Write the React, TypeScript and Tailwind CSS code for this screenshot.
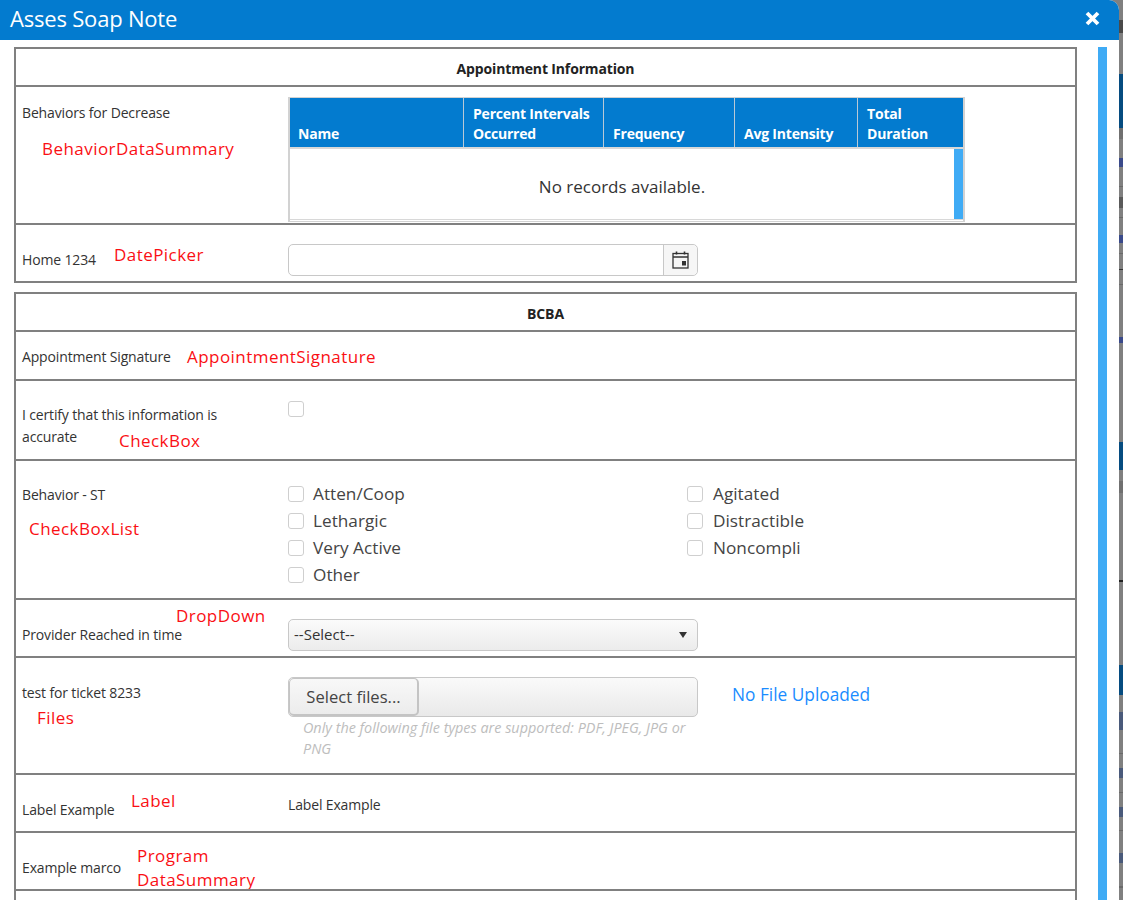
const G = "#808080";
const L = "#6a6a6a";
const B = "#064c80";
const strip: [number, string][] = [
  [20, G], [13, "#4a4a4a"], [41, G], [54, B], [11, "#707070"], [19, G], [9, "#3a4a8a"], [19, G], [1, L],
  [10, G], [11, "#5a5a5a"], [9, G], [1, L], [17, G], [8, "#3a4a8a"], [10, G], [1, L], [15, G], [1, "#333333"],
  [14, G], [1, L], [52, G], [6, "#3a4a8a"], [99, G], [28, B], [11, G], [12, "#707070"], [87, G], [2, "#222222"],
  [83, G], [30, B], [17, G], [18, "#4a5a7a"], [23, G], [1, L], [14, G], [10, "#4a5a7a"], [14, G], [1, L],
  [14, G], [10, "#4a5a7a"], [13, G], [1, L], [22, G], [10, "#4a5a7a"], [23, G], [2, L], [12, G],
];

const Note = ({ className, children }: { className: string; children: React.ReactNode }) => (
  <span className={`absolute text-[17px] leading-[24px] tracking-[0.45px] text-[#fa0f14] ${className}`}>{children}</span>
);

const Box = () => <span className="block w-4 h-4 rounded-[3px] border border-[#cfcfcf] bg-white shrink-0" />;

const CheckItem = ({ label, gap = "gap-[9px]" }: { label: string; gap?: string }) => (
  <div className={`h-[27px] flex items-center text-[17.2px] tracking-[0.02px] text-[#444] ${gap}`}>
    <Box />
    {label}
  </div>
);

const Header = ({ className, children }: { className: string; children: React.ReactNode }) => (
  <div className={`flex items-end pb-[3px] text-[14px] leading-5 tracking-[-0.2px] font-bold text-white border-r border-[#b9c9d6] ${className}`}>
    {children}
  </div>
);

export default function App() {
  return (
    <div className="flex w-[1123px] h-[900px] overflow-hidden bg-[#808080] font-['Open_Sans',sans-serif] text-[14px] tracking-[-0.15px] text-[#333]">
      {/* modal */}
      <div className="w-[1119px] h-[900px] bg-white shrink-0 overflow-hidden rounded-tr-[10px]">
        <div className="h-10 bg-[#037bcf] flex items-center justify-between pl-[10px] pr-[18px] pb-[3px]">
          <span className="text-[22px] tracking-[-0.2px] text-white">Asses Soap Note</span>
          <svg width="17" height="17" viewBox="0 0 17 17">
            <path d="M3 3l11 11M14 3L3 14" stroke="#fff" strokeWidth="3.8" />
          </svg>
        </div>

        <div className="flex pt-[7px] pl-[14px]">
          <div className="w-[1063px] shrink-0">
            {/* Appointment Information */}
            <section className="border-2 border-[#808080]">
              <div className="h-[38px] pt-[3px] border-b-2 border-[#808080] flex items-center justify-center font-bold text-[#222]">
                Appointment Information
              </div>
              <div className="relative h-[138px] border-b-2 border-[#808080] flex">
                <div className="w-[272px] pl-[6px] pt-[15px] shrink-0">Behaviors for Decrease</div>
                <Note className="left-[26px] top-[50px]">BehaviorDataSummary</Note>
                <div className="w-[677px] h-[125px] mt-[10px] border-x-2 border-b border-t border-[#d2d2d2] flex flex-col">
                  <div className="h-[51px] bg-[#037bcf] flex shrink-0 border-b-2 border-[#d8d8d8]">
                    <Header className="w-[174px] pl-[8px]">Name</Header>
                    <Header className="w-[140px] pl-[9px]">Percent Intervals<br />Occurred</Header>
                    <Header className="w-[131px] pl-[9px]">Frequency</Header>
                    <Header className="w-[123px] pl-[9px]">Avg Intensity</Header>
                    <Header className="flex-1 pl-[9px] border-r-0">Total<br />Duration</Header>
                  </div>
                  <div className="flex-1 flex border-b border-[#d8d8d8] mb-[1px]">
                    <div className="flex-1 flex items-center justify-center pt-[5px] text-[17px] tracking-[0px] text-[#333]">
                      No records available.
                    </div>
                    <div className="w-[9px] bg-[#3fabf5]" />
                  </div>
                </div>
              </div>
              <div className="relative h-[56px] flex">
                <div className="w-[272px] pl-[6px] pt-[24px] shrink-0">Home 1234</div>
                <Note className="left-[98px] top-[18px]">DatePicker</Note>
                <div className="w-[410px] h-8 mt-[19px] border border-[#c8c8c8] rounded-[5px] flex">
                  <div className="flex-1" />
                  <div className="w-[34px] border-l border-[#c8c8c8] bg-[#f6f6f6] rounded-r-[5px] flex items-center justify-center">
                    <svg width="17" height="18" viewBox="0 0 17 18" fill="none">
                      <rect x="1" y="2.5" width="15" height="14.5" stroke="#333" strokeWidth="1.3" />
                      <path d="M1 6h15" stroke="#333" strokeWidth="1.5" />
                      <path d="M4.5 0.5v3M12.5 0.5v3" stroke="#333" strokeWidth="1.6" />
                      <rect x="10" y="10" width="4" height="4.5" fill="#333" />
                    </svg>
                  </div>
                </div>
              </div>
            </section>

            {/* BCBA */}
            <section className="mt-[9px] border-x-2 border-t-2 border-[#808080]">
              <div className="h-[38px] pt-[3px] border-b-2 border-[#808080] flex items-center justify-center font-bold text-[#222]">
                BCBA
              </div>
              <div className="relative h-[49px] border-b-2 border-[#808080] pl-[6px] pt-[14px]">
                Appointment Signature
                <Note className="left-[171px] top-[13px]">AppointmentSignature</Note>
              </div>
              <div className="relative h-[80px] border-b-2 border-[#808080] flex">
                <div className="w-[272px] pl-[6px] pt-[23px] shrink-0 leading-[22px] pr-[40px]">
                  I certify that this information is accurate
                </div>
                <Note className="left-[103px] top-[48px]">CheckBox</Note>
                <div className="pt-[20px]"><Box /></div>
              </div>
              <div className="relative h-[139px] border-b-2 border-[#808080] flex">
                <div className="w-[272px] pl-[6px] pt-[23px] shrink-0">Behavior - ST</div>
                <Note className="left-[13px] top-[56px]">CheckBoxList</Note>
                <div className="w-[399px] pt-[19px] shrink-0">
                  <CheckItem label="Atten/Coop" />
                  <CheckItem label="Lethargic" />
                  <CheckItem label="Very Active" />
                  <CheckItem label="Other" />
                </div>
                <div className="pt-[19px]">
                  <CheckItem label="Agitated" gap="gap-[10px]" />
                  <CheckItem label="Distractible" gap="gap-[10px]" />
                  <CheckItem label="Noncompli" gap="gap-[10px]" />
                </div>
              </div>
              <div className="relative h-[58px] border-b-2 border-[#808080] flex">
                <div className="w-[272px] pl-[6px] pt-[24px] shrink-0">Provider Reached in time</div>
                <Note className="left-[160px] top-[4px]">DropDown</Note>
                <div className="w-[410px] h-8 mt-[19px] border border-[#c8c8c8] rounded-[5px] bg-gradient-to-b from-[#fbfbfb] to-[#ececec] flex items-center justify-between pl-[5px] pr-[10px] pb-[1px] text-[15px] tracking-[0px]">
                  --Select--
                  <svg width="8" height="6" viewBox="0 0 8 6">
                    <path d="M0 0h8L4 6z" fill="#333" />
                  </svg>
                </div>
              </div>
              <div className="relative h-[117px] border-b-2 border-[#808080] flex">
                <div className="w-[272px] pl-[6px] pt-[24px] shrink-0">test for ticket 8233</div>
                <Note className="left-[21px] top-[48px]">Files</Note>
                <div className="w-[410px] pt-[19px] shrink-0">
                  <div className="h-10 border border-[#c8c8c8] rounded-[5px] bg-gradient-to-b from-[#fafafa] to-[#e9e9e9] flex">
                    <div className="w-[130px] border-2 border-[#c4c4c4] border-t-[1px] border-l-[1px] rounded-[5px] bg-gradient-to-b from-[#f8f8f8] to-[#ececec] flex items-center justify-center pt-[2px] text-[16.6px] tracking-[0px] text-[#444]">
                      Select files...
                    </div>
                  </div>
                  <p className="pl-[15px] pr-[5px] italic text-[14.4px] tracking-[0px] leading-[21px] text-[#bdbdbd]">
                    Only the following file types are supported: PDF, JPEG, JPG or PNG
                  </p>
                </div>
                <div className="pl-[34px] pt-[24px] text-[17.3px] tracking-[0px] text-[#1a8cff]">No File Uploaded</div>
              </div>
              <div className="relative h-[58px] border-b-2 border-[#808080] flex">
                <div className="w-[272px] pl-[6px] pt-[24px] shrink-0">Label Example</div>
                <Note className="left-[115px] top-[14px]">Label</Note>
                <div className="pt-[19px]">Label Example</div>
              </div>
              <div className="relative h-[58px] border-b-2 border-[#808080] pl-[6px] pt-[24px] overflow-hidden">
                Example marco
                <Note className="left-[121px] top-[11px]">Program<br />DataSummary</Note>
              </div>
              <div className="h-[20px]" />
            </section>
          </div>
          <div className="w-[9px] h-[900px] ml-[21px] bg-[#3fabf5] shrink-0" />
        </div>
      </div>

      {/* page behind the modal */}
      <div className="w-1 flex flex-col shrink-0">
        {strip.map(([h, color], i) => (
          <div key={i} className="shrink-0" style={{ height: h, backgroundColor: color }} />
        ))}
      </div>
    </div>
  );
}
